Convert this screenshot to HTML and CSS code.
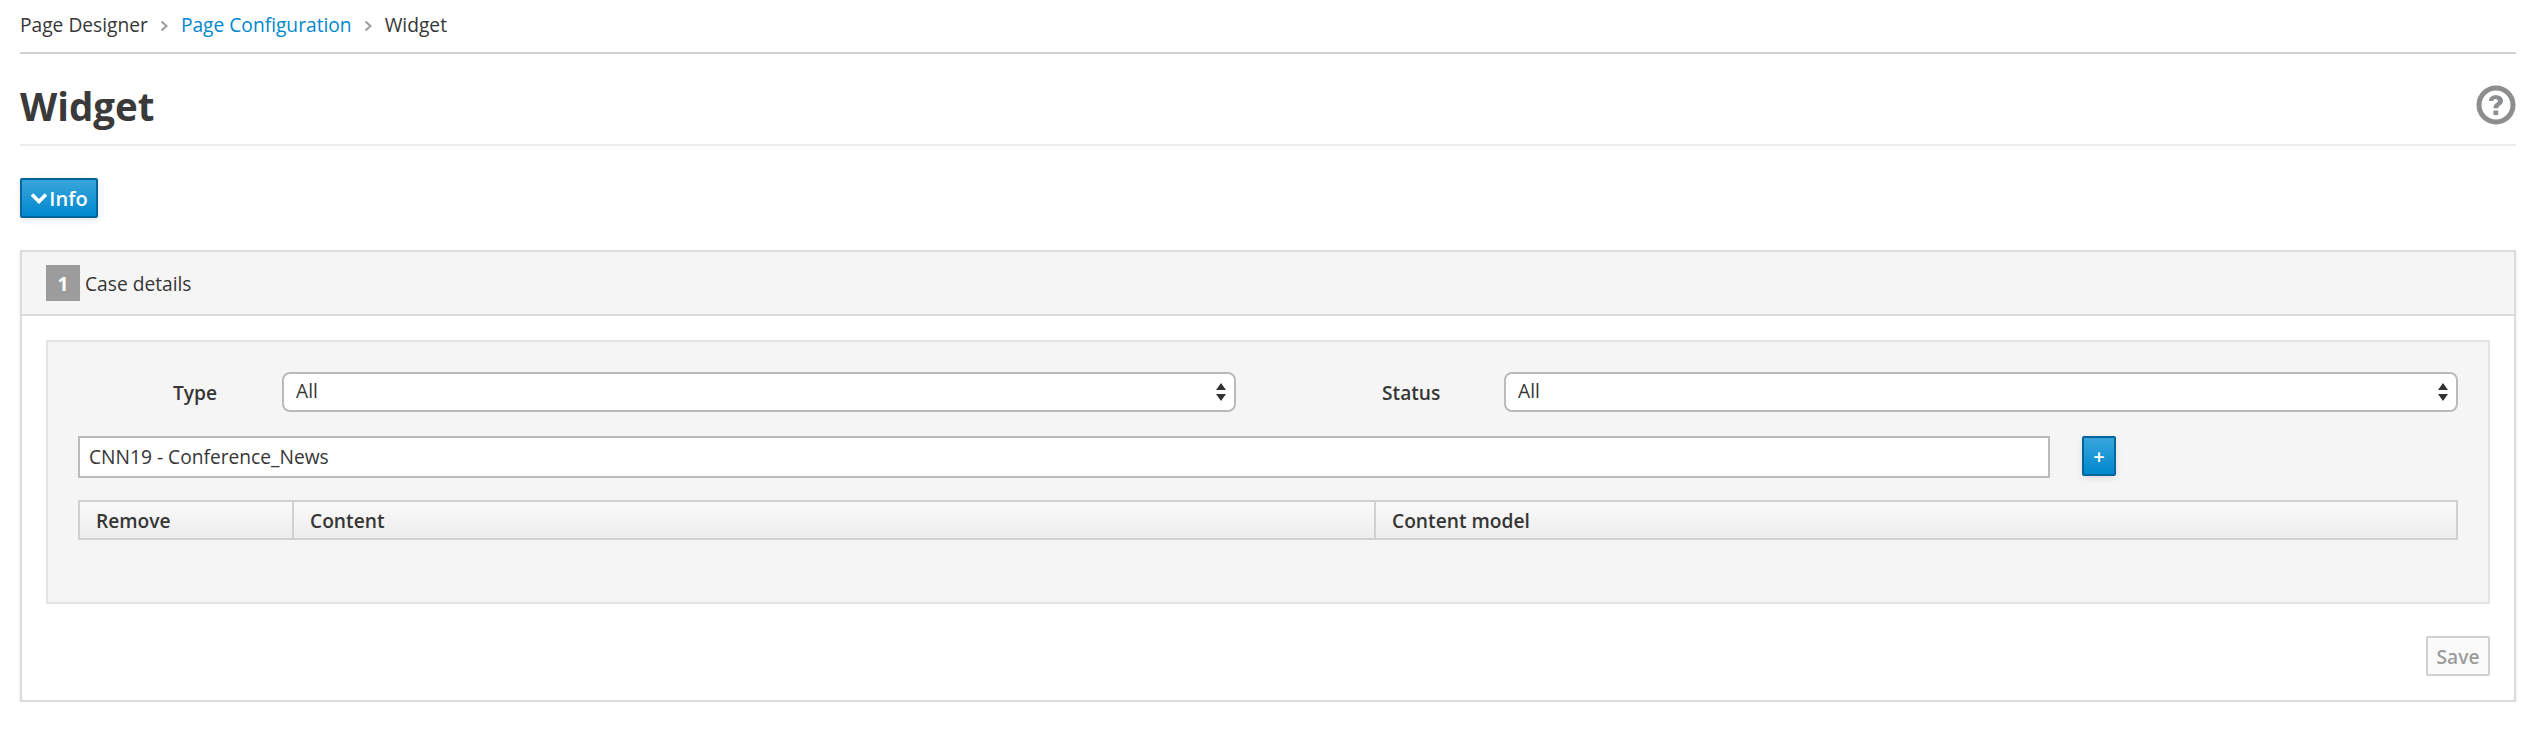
FILE: index.html
```html
<!DOCTYPE html>
<html>
<head>
    <meta charset="UTF-8">
    <title>Widget</title>
    <link rel="stylesheet" href="styles.css">
</head>
<body>
    <ol class="breadcrumb">
        <li>Page Designer</li>
        <li class="crumb-sep">
            <svg width="9" height="12" viewBox="0 0 9 12"><path d="M1.5 1.5 6.5 6l-5 4.500" fill="none" stroke="#9c9c9c" stroke-width="2"/></svg>
        </li>
        <li><a href="#">Page Configuration</a></li>
        <li class="crumb-sep">
            <svg width="9" height="12" viewBox="0 0 9 12"><path d="M1.5 1.500 6.500 6l-5 4.500" fill="none" stroke="#9c9c9c" stroke-width="2"/></svg>
        </li>
        <li>Widget</li>
    </ol>

    <div class="page-header">
        <h1>Widget</h1>
        <svg class="help-icon" width="40" height="40" viewBox="0 0 40 40">
            <circle cx="20" cy="20" r="17" fill="none" stroke="#8b8d8f" stroke-width="5"/>
            <path d="M13 16c0-3.800 3-5.800 7-5.800s7 2.200 7 5.500c0 4.600-4.800 4.300-4.800 7.600h-4.700c0-5.300 4.300-5 4.300-7.400 0-1.100-1-1.800-2.200-1.800s-2.300.8-2.300 2z" fill="#8b8d8f"/>
            <rect x="17.500" y="25.500" width="4.700" height="4.500" fill="#8b8d8f"/>
        </svg>
    </div>

    <button class="btn-primary btn-info">
        <svg width="18" height="12" viewBox="0 0 18 12"><path d="M2 2.500 9 9.500l7-7" fill="none" stroke="#fff" stroke-width="3.600"/></svg>Info
    </button>

    <section class="panel">
        <header class="panel-heading">
            <span class="step-number">1</span>
            <span>Case details</span>
        </header>
        <div class="panel-body">
            <div class="well">
                <div class="filter-row">
                    <label class="label-type">Type</label>
                    <div class="select-box">
                        <select><option>All</option></select>
                        <svg class="select-arrows" width="10" height="18" viewBox="0 0 10 18"><path d="M5 0l5 7H0zM5 18 0 11h10z" fill="#333"/></svg>
                    </div>
                    <label class="label-status">Status</label>
                    <div class="select-box">
                        <select><option>All</option></select>
                        <svg class="select-arrows" width="10" height="18" viewBox="0 0 10 18"><path d="M5 0l5 7H0zM5 18 0 11h10z" fill="#333"/></svg>
                    </div>
                </div>
                <div class="content-row">
                    <input type="text" value="CNN19 - Conference_News">
                    <button class="btn-primary btn-add">+</button>
                </div>
                <table class="content-table">
                    <thead>
                        <tr>
                            <th class="col-remove">Remove</th>
                            <th class="col-content">Content</th>
                            <th>Content model</th>
                        </tr>
                    </thead>
                </table>
            </div>
            <div class="panel-actions">
                <button class="btn-save">Save</button>
            </div>
        </div>
    </section>
</body>
</html>
```

FILE: styles.css
```css
* {
    box-sizing: border-box;
}

body {
    margin: 0;
    padding: 0 30px 0 20px;
    background-color: #fff;
    color: #363636;
    font-family: "Open Sans", "Noto Sans", sans-serif;
    font-size: 19.2px;
}

.breadcrumb {
    display: flex;
    align-items: center;
    gap: 12px;
    list-style: none;
    margin: 0;
    padding: 0;
    height: 54px;
    padding-bottom: 4px;
    border-bottom: 2px solid #d1d1d1;
}

.breadcrumb a {
    color: #0088ce;
    text-decoration: none;
}

.crumb-sep {
    display: flex;
    margin-top: 4px;
}

.page-header {
    display: flex;
    align-items: center;
    justify-content: space-between;
    height: 92px;
    padding-top: 12px;
    border-bottom: 2px solid #ededed;
}

h1 {
    margin: 2px 0 0;
    font-size: 38.5px;
    font-weight: 700;
    color: #3a3a3a;
}

.btn-primary {
    display: flex;
    align-items: center;
    justify-content: center;
    padding: 0;
    border: 2px solid #00659c;
    border-radius: 2px;
    background: linear-gradient(#39a5dc, #0088ce);
    color: #fff;
    font-family: inherit;
    font-weight: 600;
    box-shadow: 0 2px 6px rgba(3, 3, 3, 0.1);
}

.btn-info {
    gap: 1px;
    width: 78px;
    height: 40px;
    margin-top: 32px;
    font-size: 20px;
}

.panel {
    margin-top: 32px;
    border: 2px solid #dcdcdc;
    box-shadow: 0 2px 3px rgba(3, 3, 3, 0.1);
}

.panel-heading {
    display: flex;
    align-items: center;
    gap: 5px;
    height: 64px;
    padding-left: 24px;
    border-bottom: 2px solid #dcdcdc;
    background-color: #f5f5f5;
}

.step-number {
    display: flex;
    align-items: center;
    justify-content: center;
    width: 34px;
    height: 36px;
    background-color: #9c9c9c;
    color: #fff;
    font-weight: 700;
}

.panel-body {
    padding: 24px;
}

.well {
    height: 264px;
    padding: 30px;
    border: 2px solid #e3e3e3;
    background-color: #f5f5f5;
}

.filter-row {
    display: flex;
    align-items: center;
}

.filter-row label {
    font-weight: 600;
}

.label-type {
    width: 204px;
    padding-left: 95px;
}

.label-status {
    width: 268px;
    padding-left: 146px;
}

.select-box {
    position: relative;
    flex: 1;
}

.select-box select {
    display: block;
    width: 100%;
    height: 40px;
    padding: 0 12px 4px;
    border: 2px solid #bbb;
    border-radius: 8px;
    background-color: #fff;
    color: #363636;
    font-family: inherit;
    font-size: 19.2px;
    appearance: none;
}

.select-arrows {
    position: absolute;
    top: 11px;
    right: 10px;
}

.content-row {
    display: flex;
    align-items: flex-start;
    gap: 32px;
    margin-top: 24px;
}

.content-row input {
    width: 1972px;
    height: 42px;
    padding: 0 9px 2px;
    border: 2px solid #bbb;
    background-color: #fff;
    color: #363636;
    font-family: inherit;
    font-size: 19.2px;
}

.btn-add {
    width: 34px;
    height: 40px;
    font-size: 20px;
}

.content-table {
    width: 100%;
    margin-top: 22px;
    border-collapse: collapse;
    table-layout: fixed;
}

.content-table th {
    height: 38px;
    padding: 0 16px;
    border: 2px solid #d1d1d1;
    background: linear-gradient(#fafafa, #ededed);
    font-weight: 600;
    text-align: left;
}

.col-remove {
    width: 214px;
}

.col-content {
    width: 1082px;
}

.panel-actions {
    display: flex;
    justify-content: flex-end;
    margin-top: 32px;
}

.btn-save {
    width: 64px;
    height: 40px;
    padding: 0;
    border: 2px solid #d1d1d1;
    border-radius: 2px;
    background-color: #fafafa;
    color: #9c9c9c;
    font-family: inherit;
    font-size: 19.2px;
    font-weight: 600;
}
```
